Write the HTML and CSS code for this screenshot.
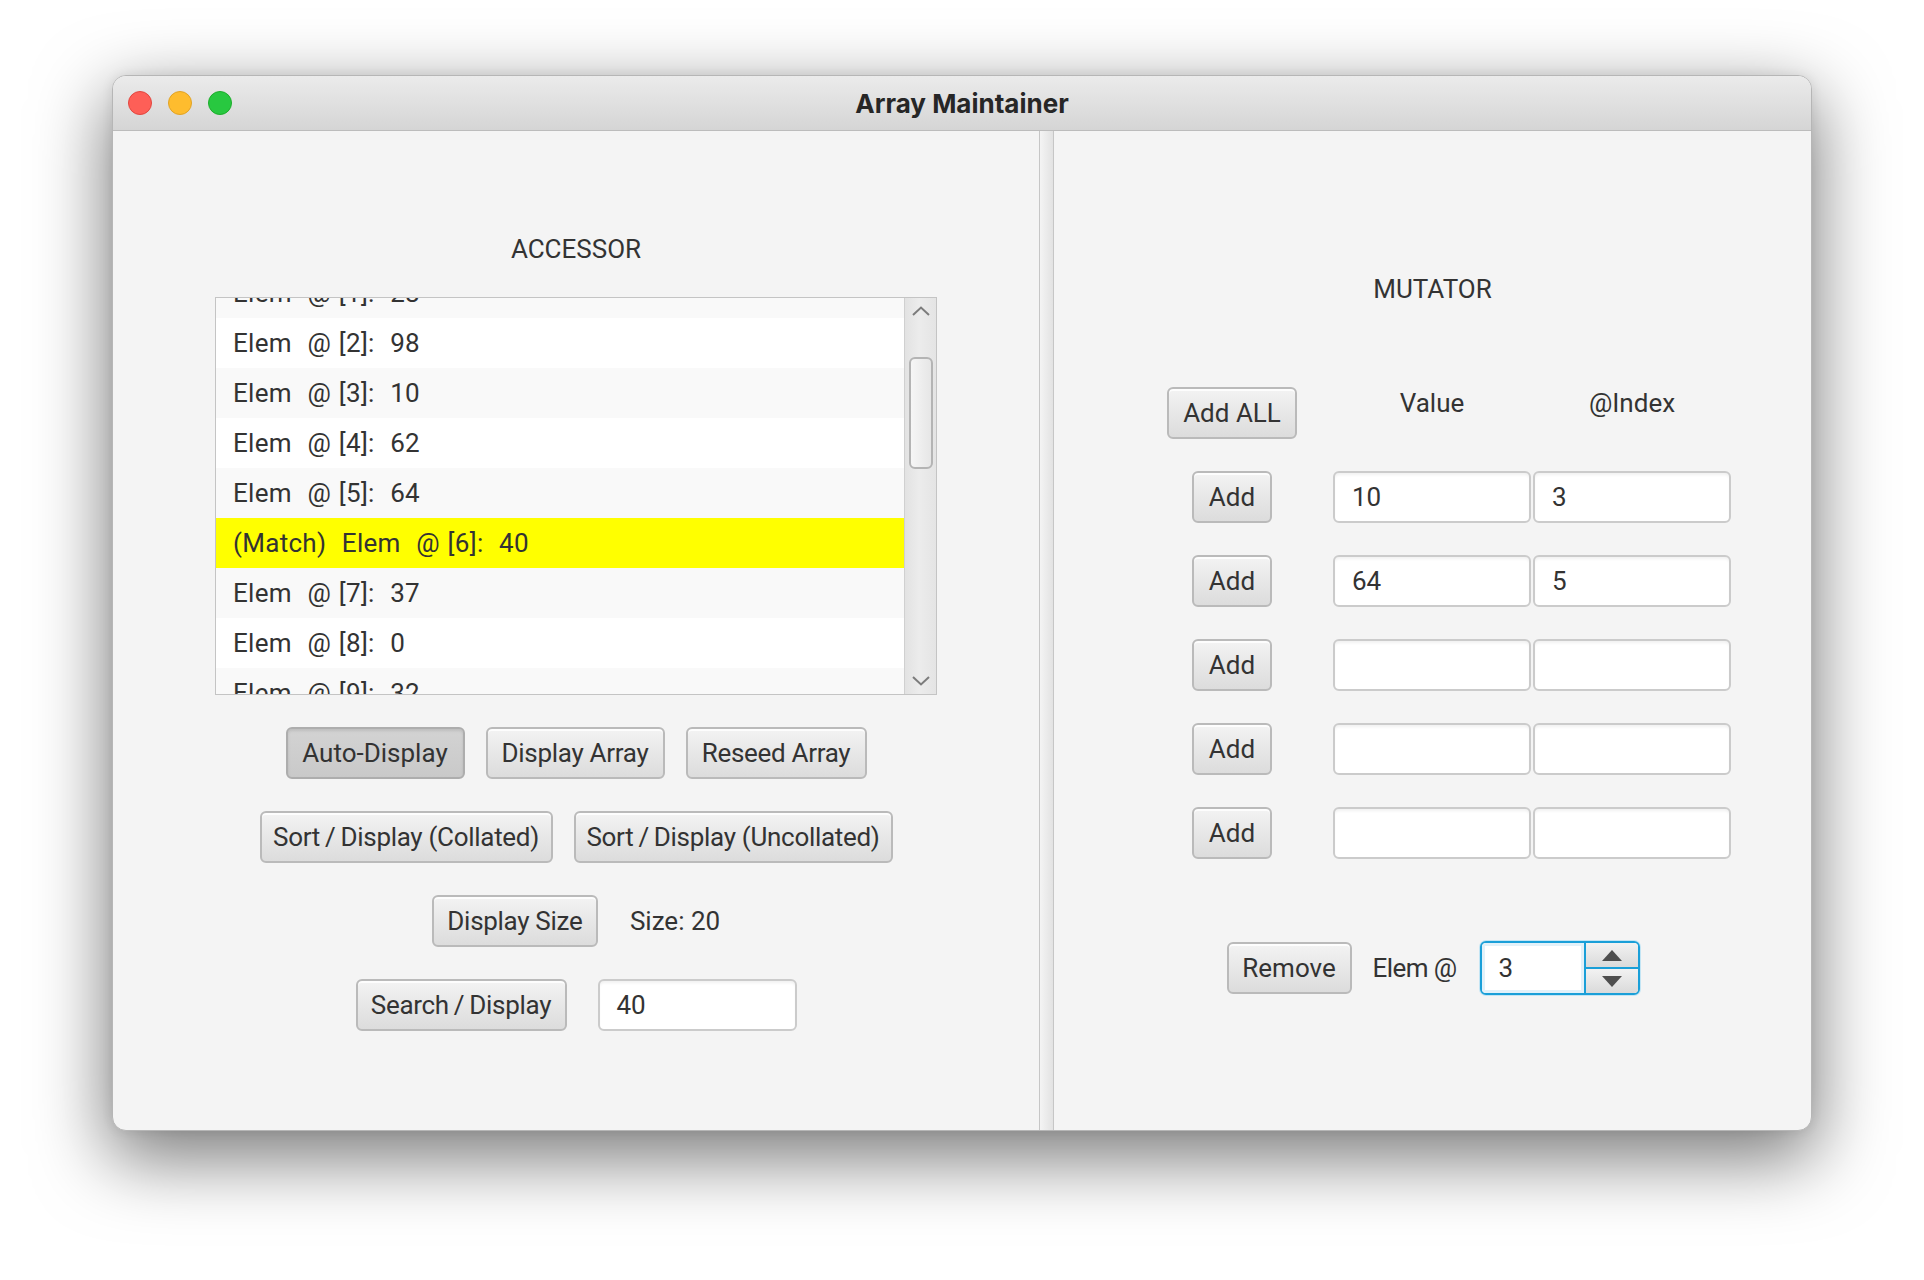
FILE: index.html
```html
<!DOCTYPE html>
<html lang="en">
<head>
<meta charset="utf-8">
<title>Array Maintainer</title>
<link rel="stylesheet" href="styles.css">
</head>
<body>
<div class="desktop">
  <div class="window">
    <div class="titlebar">
      <div class="lights">
        <span class="light red"></span>
        <span class="light yellow"></span>
        <span class="light green"></span>
      </div>
      <div class="title">Array Maintainer</div>
      <div></div>
    </div>
    <div class="content">
      <section class="pane left">
        <div class="heading">ACCESSOR</div>
        <div class="list">
          <div class="viewport">
            <div class="rows">
              <div class="item">Elem  @ [0]:  51</div>
              <div class="item">Elem  @ [1]:  28</div>
              <div class="item">Elem  @ [2]:  98</div>
              <div class="item">Elem  @ [3]:  10</div>
              <div class="item">Elem  @ [4]:  62</div>
              <div class="item">Elem  @ [5]:  64</div>
              <div class="item match">(Match)  Elem  @ [6]:  40</div>
              <div class="item">Elem  @ [7]:  37</div>
              <div class="item">Elem  @ [8]:  0</div>
              <div class="item">Elem  @ [9]:  32</div>
              <div class="item">Elem  @ [10]:  75</div>
              <div class="item">Elem  @ [11]:  19</div>
            </div>
          </div>
          <div class="vscroll">
            <div class="sb-btn"><svg width="18" height="10" viewBox="0 0 18 10"><polyline points="1,9 9,1.5 17,9" fill="none" stroke="#7c7c7c" stroke-width="2"/></svg></div>
            <div class="sb-track"><div class="thumb"></div></div>
            <div class="sb-btn"><svg width="18" height="10" viewBox="0 0 18 10"><polyline points="1,1 9,8.5 17,1" fill="none" stroke="#7c7c7c" stroke-width="2"/></svg></div>
          </div>
        </div>
        <div class="row gap21">
          <div class="btn on w-auto">Auto-Display</div>
          <div class="btn tight w-disp">Display Array</div>
          <div class="btn tight w-reseed">Reseed Array</div>
        </div>
        <div class="row gap21">
          <div class="btn tight w-col">Sort&thinsp;/&thinsp;Display (Collated)</div>
          <div class="btn tight w-uncol">Sort&thinsp;/&thinsp;Display (Uncollated)</div>
        </div>
        <div class="row gap32">
          <div class="btn tight w-size">Display Size</div>
          <div class="text">Size: 20</div>
        </div>
        <div class="row gap31">
          <div class="btn tight w-search">Search&thinsp;/&thinsp;Display</div>
          <div class="field w-sfield">40</div>
        </div>
      </section>
      <div class="divider"></div>
      <section class="pane right">
        <div class="heading mut">MUTATOR</div>
        <div class="grid">
          <div class="btn w-addall c1">Add ALL</div>
          <div class="glabel c3">Value</div>
          <div class="glabel c4">@Index</div>

          <div class="btn w-add c1">Add</div>
          <div class="field c3">10</div>
          <div class="field c4">3</div>

          <div class="btn w-add c1">Add</div>
          <div class="field c3">64</div>
          <div class="field c4">5</div>

          <div class="btn w-add c1">Add</div>
          <div class="field c3"></div>
          <div class="field c4"></div>

          <div class="btn w-add c1">Add</div>
          <div class="field c3"></div>
          <div class="field c4"></div>

          <div class="btn w-add c1">Add</div>
          <div class="field c3"></div>
          <div class="field c4"></div>
        </div>
        <div class="remove-row">
          <div class="btn w-remove">Remove</div>
          <div class="text elem">Elem @</div>
          <div class="spinner">
            <div class="spin-field">3</div>
            <div class="spin-btns">
              <div class="spin-up"><svg width="20" height="11" viewBox="0 0 20 11"><polygon points="0,11 10,0 20,11" fill="#4e4e4e"/></svg></div>
              <div class="spin-down"><svg width="20" height="11" viewBox="0 0 20 11"><polygon points="0,0 10,11 20,0" fill="#4e4e4e"/></svg></div>
            </div>
          </div>
        </div>
      </section>
    </div>
  </div>
</div>
</body>
</html>
```

FILE: styles.css
```css
html, body {
  margin: 0;
  background: #ffffff;
}
body {
  font-family: Roboto, "Liberation Sans", sans-serif;
  color: #333333;
  font-size: 26px;
}
.desktop {
  padding: 75px 0 0 112px;
  height: 1280px;
  box-sizing: border-box;
  overflow: hidden;
}
.window {
  width: 1700px;
  height: 1056px;
  box-sizing: border-box;
  border: 1px solid #b6b6b6;
  border-radius: 14px;
  overflow: hidden;
  background: #f4f4f4;
  display: flex;
  flex-direction: column;
  box-shadow: 0 24px 72px 4px rgba(0, 0, 0, 0.52), 0 0 12px rgba(0, 0, 0, 0.08);
}
.titlebar {
  height: 55px;
  box-sizing: border-box;
  border-bottom: 1px solid #bcbcbc;
  background: linear-gradient(#ebebeb, #d5d5d5);
  display: grid;
  grid-template-columns: 1fr auto 1fr;
  align-items: center;
  flex: none;
}
.lights {
  display: flex;
  gap: 16px;
  padding-left: 15px;
}
.light {
  width: 24px;
  height: 24px;
  border-radius: 50%;
  box-sizing: border-box;
  border: 1px solid;
}
.red { background: #fe5f57; border-color: #e2463f; }
.yellow { background: #febc2e; border-color: #e1a325; }
.green { background: #28c840; border-color: #1dad2b; }
.title {
  font-family: Inter, Roboto, sans-serif;
  font-weight: 700;
  font-size: 26px;
  color: #262626;
}
.content {
  flex: 1;
  display: flex;
}
.pane.left {
  width: 926px;
  padding-top: 102px;
  display: flex;
  flex-direction: column;
  align-items: center;
  gap: 32px;
}
.divider {
  width: 15px;
  box-sizing: border-box;
  border-left: 1px solid #c6c6c6;
  border-right: 1px solid #c6c6c6;
  background: linear-gradient(to right, #f4f4f4, #e2e2e2);
}
.pane.right {
  flex: 1;
  padding-top: 142px;
  display: flex;
  flex-direction: column;
  align-items: center;
}
.heading {
  height: 32px;
  line-height: 32px;
  font-size: 26px;
}
.heading.mut {
  margin-bottom: 82px;
}

/* list */
.list {
  width: 722px;
  height: 398px;
  box-sizing: border-box;
  border: 1px solid #c4c4c4;
  background: #ffffff;
  display: flex;
}
.viewport {
  flex: 1;
  overflow: hidden;
}
.rows {
  margin-top: -80px;
}
.item {
  height: 50px;
  line-height: 50px;
  padding-left: 17px;
  white-space: pre;
  letter-spacing: 0.3px;
  word-spacing: 1px;
  background: #ffffff;
}
.item:nth-child(even) {
  background: #f9f9f9;
}
.item.match {
  background: #ffff00;
}
.vscroll {
  width: 32px;
  box-sizing: border-box;
  border-left: 1px solid #d0d0d0;
  background: linear-gradient(to right, #e2e2e2, #ececec 45%, #e4e4e4);
  display: flex;
  flex-direction: column;
}
.sb-btn {
  height: 26px;
  display: flex;
  align-items: center;
  justify-content: center;
}
.sb-track {
  flex: 1;
}
.thumb {
  margin: 33px 0 0 4px;
  width: 24px;
  height: 112px;
  box-sizing: border-box;
  border: 2px solid #b4b4b4;
  border-radius: 6px;
  background: linear-gradient(to right, #f6f6f6, #e6e6e6);
}

/* rows of buttons */
.row {
  display: flex;
  align-items: center;
}
.gap21 { gap: 21px; }
.gap32 { gap: 32px; }
.gap31 { gap: 31px; }

.btn {
  height: 52px;
  box-sizing: border-box;
  border: 2px solid #bababa;
  border-radius: 6px;
  background: linear-gradient(#f3f3f3, #dcdcdc);
  box-shadow: inset 0 2px 0 rgba(255, 255, 255, 0.8);
  display: flex;
  align-items: center;
  justify-content: center;
  white-space: nowrap;
  color: #333333;
}
.btn.tight {
  letter-spacing: -0.3px;
}
.btn.on {
  background: linear-gradient(#d3d3d3, #c9c9c9);
  border-color: #adadad;
  box-shadow: inset 0 2px 3px rgba(0, 0, 0, 0.1);
}
.w-auto { width: 179px; }
.w-disp { width: 179px; }
.w-reseed { width: 181px; }
.w-col { width: 293px; }
.w-uncol { width: 319px; }
.w-size { width: 166px; }
.w-search { width: 211px; }
.w-addall { width: 130px; }
.w-add { width: 80px; }
.w-remove { width: 125px; }
.w-sfield { width: 199px; }

.field {
  height: 52px;
  box-sizing: border-box;
  border: 2px solid #cbcbcb;
  border-radius: 6px;
  background: #ffffff;
  box-shadow: inset 0 3px 3px -1px rgba(0, 0, 0, 0.06);
  padding-left: 17px;
  display: flex;
  align-items: center;
  color: #333333;
}

/* mutator grid */
.grid {
  align-self: flex-start;
  margin-left: 113px;
  display: grid;
  grid-template-columns: 130px 32px 198px 198px;
  grid-auto-rows: 52px;
  column-gap: 2px;
  row-gap: 32px;
}
.c1 { grid-column: 1; justify-self: center; }
.c3 { grid-column: 3; }
.c4 { grid-column: 4; }
.glabel {
  align-self: start;
  justify-self: center;
  line-height: 32px;
}

.remove-row {
  margin-top: 82px;
  display: flex;
  align-items: center;
  margin-left: 2px;
}
.elem {
  margin-left: 21px;
  margin-right: 24px;
  letter-spacing: -0.6px;
}
.spinner {
  width: 160px;
  height: 54px;
  box-sizing: border-box;
  border: 2px solid #1a9fd8;
  border-radius: 6px;
  box-shadow: 0 0 0 1px #c3e5f4;
  overflow: hidden;
  display: flex;
  background: #ffffff;
}
.spin-field {
  flex: 1;
  padding-left: 16px;
  display: flex;
  align-items: center;
  box-shadow: inset 0 0 0 3px #e2f1f9;
}
.spin-btns {
  width: 52px;
  border-left: 2px solid #1a9fd8;
  display: flex;
  flex-direction: column;
}
.spin-up, .spin-down {
  flex: 1;
  display: flex;
  align-items: center;
  justify-content: center;
  background: linear-gradient(#f2f2f2, #dadada);
}
.spin-up {
  border-bottom: 2px solid #1a9fd8;
}
```
